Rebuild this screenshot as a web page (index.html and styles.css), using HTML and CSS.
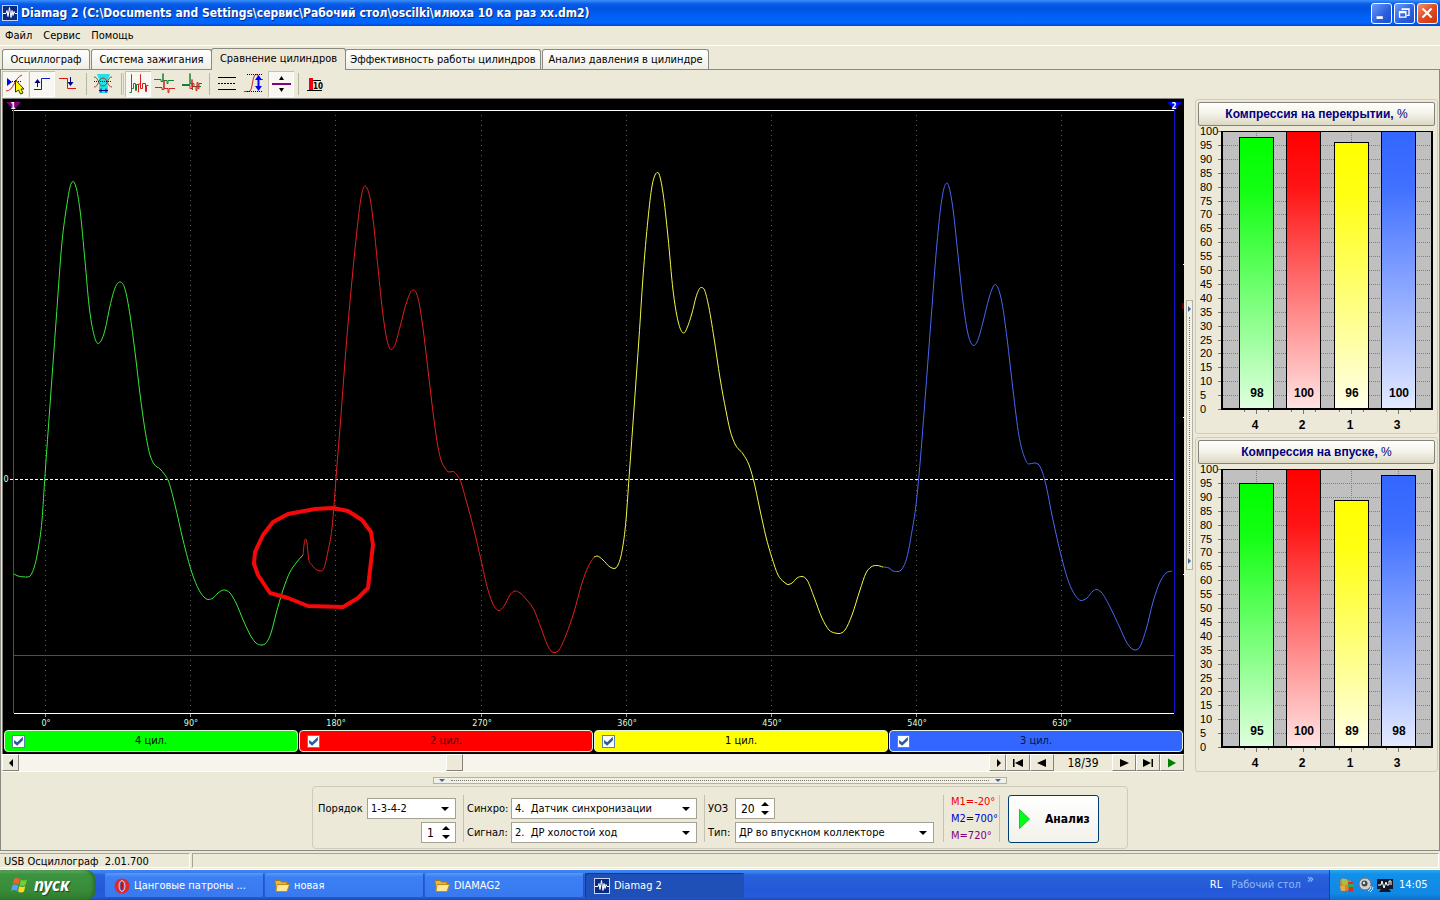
FILE: index.html
```html
<!DOCTYPE html>
<html lang="ru">
<head>
<meta charset="utf-8">
<title>Diamag 2</title>
<link rel="stylesheet" href="styles.css">
</head>
<body>
<svg class="defs" width="0" height="0" aria-hidden="true">
  <defs>
    <symbol id="logo" viewBox="0 0 16 16">
      <rect width="16" height="16" fill="#0a2a80"/><rect x=".5" y=".5" width="15" height="15" fill="none" stroke="#c8d4f0"/>
      <path d="M1 8.500h3l1-3 1 6 1.500-9 1.500 10 1-7 1 5 1-4 1 2h2" fill="none" stroke="#fff"/>
    </symbol>
    <symbol id="folder" viewBox="0 0 16 16">
      <path d="M1 3.500l1-1h4l1.500 1.500H13v9H2z" fill="#e8b83c" stroke="#a87818"/>
      <path d="M3 6.500h12.500L13 13.500H2z" fill="#ffe890" stroke="#b88a20"/>
    </symbol>
    <linearGradient id="fade-green" x1="0" y1="0" x2="0" y2="1"><stop offset="0" stop-color="#00ff00"/><stop offset=".2" stop-color="#14ff14"/><stop offset="1" stop-color="#e0ffe0"/></linearGradient>
    <linearGradient id="fade-red" x1="0" y1="0" x2="0" y2="1"><stop offset="0" stop-color="#ff0000"/><stop offset=".2" stop-color="#ff1414"/><stop offset="1" stop-color="#ffe4e4"/></linearGradient>
    <linearGradient id="fade-yellow" x1="0" y1="0" x2="0" y2="1"><stop offset="0" stop-color="#ffff00"/><stop offset=".2" stop-color="#ffff14"/><stop offset="1" stop-color="#ffffe8"/></linearGradient>
    <linearGradient id="fade-blue" x1="0" y1="0" x2="0" y2="1"><stop offset="0" stop-color="#3366ff"/><stop offset=".2" stop-color="#4070ff"/><stop offset="1" stop-color="#e4eaff"/></linearGradient>
  </defs>
</svg>

<header class="titlebar">
  <svg class="icon16"><use href="#logo"/></svg>
  <h1 class="title">Diamag 2 (C:\Documents and Settings\сервис\Рабочий стол\oscilki\илюха 10 ка раз xx.dm2)</h1>
  <button class="win-btn" aria-label="Свернуть"><svg viewBox="0 0 21 21"><path d="M5 15h7" stroke="#fff" stroke-width="3"/></svg></button>
  <button class="win-btn" aria-label="Восстановить"><svg viewBox="0 0 21 21"><path d="M8 7V5.500h7.500v7H13M5 8.500h7v6H5zM5 9.500h7M8 6h7" fill="none" stroke="#fff" stroke-width="1.500"/></svg></button>
  <button class="win-btn close" aria-label="Закрыть"><svg viewBox="0 0 21 21"><path d="M5 5l10 10M15 5L5 15" stroke="#fff" stroke-width="2.200"/></svg></button>
</header>

<nav class="menubar">
  <button>Файл</button><button>Сервис</button><button>Помощь</button>
</nav>

<div class="tabs" role="tablist">
  <button class="tab t1" role="tab">Осциллограф</button>
  <button class="tab t2" role="tab">Система зажигания</button>
  <button class="tab t3 active" role="tab" aria-selected="true">Сравнение цилиндров</button>
  <button class="tab t4" role="tab">Эффективность работы цилиндров</button>
  <button class="tab t5" role="tab">Анализ давления в цилиндре</button>
</div>

<main class="page">
  <div class="toolbar" role="toolbar">
    <button class="tool on" aria-label="Курсор"><svg viewBox="2 71 26 26"><path d="M7 78v8l5-4z" fill="#00f"/><path d="M6 91c8 0 8-13 16-16" fill="none" stroke="#c22"/><path d="M12 81.500h10" stroke="#008" stroke-dasharray="1 1"/><path d="M15.500 80v12l3-2 2 4 2.500-1-2-4h3z" fill="#ff0" stroke="#330"/></svg></button>
    <button class="tool on" aria-label="Передний фронт"><svg viewBox="29 71 26 26"><path d="M34 89.500h7.500v-11H50" fill="none" stroke="#1414c8"/><path d="M37.500 87v-7" stroke="#008"/><path d="M34.500 83l3-4 3 4z" fill="#008"/></svg></button>
    <button class="tool" aria-label="Задний фронт"><svg viewBox="56 71 26 26"><path d="M59 78.500h8.500v10H76" fill="none" stroke="#e01010"/><path d="M70.500 77v7" stroke="#008"/><path d="M67.500 82l3 4 3-4z" fill="#008"/></svg></button>
    <span class="sep"></span>
    <button class="tool" aria-label="Диапазон"><svg viewBox="91 71 26 26"><path d="M97 74h13l-3 8 1 5v6h-9v-6l1-5z" fill="#20e0e8"/><path d="M94 77c5 0 4 9 9 9s4-9 9-9" fill="none" stroke="#188030"/><path d="M94 87c5 0 4-9 9-9s4 9 9 9" fill="none" stroke="#b03030"/><path d="M94 81.500h18" stroke="#023" stroke-dasharray="1 1"/><path d="M99 90.500h9M101 88.500v4M106 88.500v4" stroke="#008"/></svg></button>
    <span class="sep double"></span>
    <button class="tool on" aria-label="Рядом"><svg viewBox="125 71 26 26"><path d="M129.500 92.500h2v-18 14h2v-5h2v7h1v-6h2" fill="none" stroke="#188030"/><path d="M137.500 92h1v-8h2V74.500v14h2v-5h3v8h1v-6h2" fill="none" stroke="#d02020"/></svg></button>
    <button class="tool" aria-label="Друг под другом"><svg viewBox="152 71 26 26"><path d="M154 79.500h7v2h2v-8 7h4v3h1v-3h6" fill="none" stroke="#188030"/><path d="M155 87.500h7v2h2v-9 8h4v4h1v-4h6" fill="none" stroke="#d02020"/></svg></button>
    <button class="tool" aria-label="Наложение"><svg viewBox="179 71 26 26"><path d="M182 84.500h8v-11 10h4v3h7M192.500 84v6" fill="none" stroke="#188030"/><path d="M182 85.500h8v3h2v-9 7h4v4h1v-8h1v6h1v-5h3" fill="none" stroke="#d02020"/></svg></button>
    <span class="sep"></span>
    <button class="tool" aria-label="Уровни"><svg viewBox="214 71 26 26"><path d="M218 77.500h18M218 89.500h18" stroke="#000"/><path d="M218 83.500h18" stroke="#000" stroke-dasharray="2 1"/></svg></button>
    <button class="tool" aria-label="Масштаб"><svg viewBox="241 71 26 26"><path d="M244 91.500h5c4 0 3-17 7-17s3 6 7 5" fill="none" stroke="#c22"/><path d="M247 74.500h16M247 91.500h16" stroke="#000" stroke-dasharray="1 1"/><path d="M258.500 78v11" stroke="#00f" stroke-width="2"/><path d="M255 80l3.500-5 3.500 5zM255 86l3.500 5 3.500-5z" fill="#00f"/></svg></button>
    <button class="tool on" aria-label="Смещение"><svg viewBox="268 71 26 26"><path d="M272 84h19" stroke="#800080" stroke-width="2"/><path d="M279 80l2.500-4 2.500 4zM279 88l2.500 4 2.500-4z"/></svg></button>
    <span class="sep"></span>
    <button class="tool" aria-label="Шкала 10"><svg viewBox="303 71 26 26"><path d="M309 78h4v12h-4z" fill="#f00014"/><path d="M307 90.500h15M313 80.500h8" stroke="#000"/><text x="313" y="89" class="tiny">10</text></svg></button>
  </div>

  <div class="content">
    <section class="left">
      <div class="scope">
        <svg class="plot" viewBox="3 99 1181 631" role="img" aria-label="Осциллограмма">
          <g id="grid"></g>
          <path d="M12 110.500h1162M14 713.500h1160" class="frame"/>
          <rect x="13" y="105" width="1" height="608" fill="#90209a"/>
          <rect x="1174" y="105" width="1" height="608" fill="#1010c8"/>
          <path d="M10 479.500h1164" class="zero"/>
          <rect x="14" y="655" width="1160" height="1" fill="#d01818"/>
          <path d="M6 102h15l-7 8z" fill="#800080"/><path d="M1167 102h15l-7 8z" fill="#0000ff"/>
          <text x="13" y="109" class="mark">1</text><text x="1174" y="109" class="mark">2</text>
          <text x="6" y="482" class="tick">0</text>
          <g id="traces"></g>
          <path class="pen" d="M315 509L333 508 348 511 362 520 371 532 373 545 370 570 368 588 358 598 343 607 308 606 288 598 270 593 258 575 254 564 255 552 263 535 273 522 288 514 315 509 333 508"/>
          <path d="M1183 264.500h1M1183 417.500h1M1183 574.500h1" stroke="#fff"/><path d="M1183 303v6" stroke="#c00"/>
        </svg>
        <div class="cylinders">
          <label class="cyl green"><input type="checkbox" checked><span>4 цил.</span></label>
          <label class="cyl red"><input type="checkbox" checked><span>2 цил.</span></label>
          <label class="cyl yellow"><input type="checkbox" checked><span>1 цил.</span></label>
          <label class="cyl blue"><input type="checkbox" checked><span>3 цил.</span></label>
        </div>
      </div>
      <div class="scroller">
        <button class="nav narrow" aria-label="Влево"><svg viewBox="0 0 16 12"><path d="M10 2v8L6 6z"/></svg></button>
        <input class="track" type="range" min="0" max="1000" value="448" aria-label="Прокрутка">
        <button class="nav narrow" aria-label="Вправо"><svg viewBox="0 0 16 12"><path d="M7 2v8l4-4z"/></svg></button>
        <button class="nav" aria-label="Первый"><svg viewBox="0 0 16 12"><path d="M3 2h1.500v8H3zM13 2v8L5 6z"/></svg></button>
        <button class="nav" aria-label="Предыдущий"><svg viewBox="0 0 16 12"><path d="M12 2v8L3 6z"/></svg></button>
        <output class="counter">18/39</output>
        <button class="nav" aria-label="Следующий"><svg viewBox="0 0 16 12"><path d="M4 2v8l9-4z"/></svg></button>
        <button class="nav" aria-label="Последний"><svg viewBox="0 0 16 12"><path d="M3 2v8l8-4zM11.500 2H13v8h-1.500z"/></svg></button>
        <button class="nav play" aria-label="Воспроизвести"><svg viewBox="0 0 16 12"><path d="M4 1.500v9L12 6z"/></svg></button>
      </div>
    </section>

    <div class="vsplit"><svg viewBox="0 0 5 8"><path d="M1 1v6l3-3z"/></svg><i></i><svg viewBox="0 0 5 8"><path d="M1 1v6l3-3z"/></svg></div>

    <aside class="right">
      <section class="card">
        <button class="card-head">Компрессия на перекрытии, <span>%</span></button>
        <svg class="bars" viewBox="1197 126 239 307" preserveAspectRatio="xMinYMin" data-values="98,100,96,100"></svg>
      </section>
      <section class="card">
        <button class="card-head">Компрессия на впуске, <span>%</span></button>
        <svg class="bars" viewBox="1197 126 239 307" preserveAspectRatio="xMinYMin" data-values="95,100,89,98"></svg>
      </section>
    </aside>
  </div>

  <div class="hsplit"><svg viewBox="0 0 8 5"><path d="M1 1h6L4 4z"/></svg><i></i><svg viewBox="0 0 8 5"><path d="M1 1h6L4 4z"/></svg></div>

  <form class="panel">
    <div class="group order">
      <label for="order">Порядок</label>
      <span class="combo"><select id="order"><option>1-3-4-2</option></select></span>
      <span class="spin"><input id="first" type="number" value="1" aria-label="Первый цилиндр"><svg viewBox="0 0 8 14"><path d="M0 4l4-4 4 4zM0 9l4 4 4-4z"/></svg></span>
    </div>
    <div class="group sync">
      <label for="sync">Синхро:</label>
      <span class="combo"><select id="sync"><option>4.&nbsp; Датчик синхронизации</option></select></span>
      <label for="signal">Сигнал:</label>
      <span class="combo"><select id="signal"><option>2.&nbsp; ДР холостой ход</option></select></span>
    </div>
    <div class="group kind">
      <label for="uoz">УОЗ</label>
      <span class="spin"><input id="uoz" type="number" value="20"><svg viewBox="0 0 8 14"><path d="M0 4l4-4 4 4zM0 9l4 4 4-4z"/></svg></span>
      <label for="kind">Тип:</label>
      <span class="combo"><select id="kind"><option>ДР во впускном коллекторе</option></select></span>
    </div>
    <div class="group marks">
      <span class="m1">M1=-20°</span><span class="m2">M2=700°</span><span class="m3">M=720°</span>
    </div>
    <div class="group go">
      <button class="analyze" type="button"><svg viewBox="0 0 11 20"><path d="M.5.500v19l10-9.500z" fill="#00ff18" stroke="#20c030"/></svg><b>Анализ</b></button>
    </div>
  </form>
</main>

<footer class="status"><span class="cell version">USB Осциллограф&nbsp; 2.01.700</span><span class="cell rest"></span></footer>

<nav class="taskbar">
  <button class="start"><svg viewBox="0 0 18 18"><path d="M3 3q3-2 6 0L7.500 8.500q-3-2-6 0z" fill="#f06030"/><path d="M10 3.500q3 2 6 0L14.500 9q-3 2-6 0z" fill="#70d030"/><path d="M1.300 9.500q3-2 6 0L6 15q-3-2-6 0z" fill="#58a0f8"/><path d="M8.300 10q3 2 6 0L13 15.500q-3 2-6 0z" fill="#ffd820"/></svg><span>пуск</span></button>
  <div class="tasks">
    <button class="task"><svg class="icon16" viewBox="0 0 16 16"><ellipse cx="8" cy="8" rx="7.500" ry="7.500" fill="#e02828"/><ellipse cx="8" cy="8" rx="3" ry="5.500" fill="#3a80f0" stroke="#fbb"/><ellipse cx="8" cy="8" rx="1.500" ry="4" fill="#c01010"/></svg>Цанговые патроны ...</button>
    <button class="task"><svg class="icon16"><use href="#folder"/></svg>новая</button>
    <button class="task"><svg class="icon16"><use href="#folder"/></svg>DIAMAG2</button>
    <button class="task current"><svg class="icon16"><use href="#logo"/></svg>Diamag 2</button>
  </div>
  <span class="lang">RL</span>
  <button class="desk">Рабочий стол</button>
  <span class="more">»</span>
  <div class="tray">
    <svg class="icon16" viewBox="0 0 16 16"><path d="M1 4l3-3 4 2 4 1v6L8 14H2z" fill="#e08028"/><path d="M2 2h6l1 5-5 2z" fill="#a8c040"/><path d="M9 5h5v9l-4 1z" fill="#d83020"/><path d="M9 7h5v3H9z" fill="#30a860"/><path d="M1 9h5v5H2z" fill="#e8a848"/></svg>
    <svg class="icon16" viewBox="0 0 16 16"><circle cx="7" cy="7" r="6" fill="#d0d0d0" stroke="#707070"/><circle cx="6.500" cy="6.500" r="3" fill="#404850"/><circle cx="6" cy="6" r="1.200" fill="#e8e8e8"/><path d="M10 14q3-1 3-5M12 15q3-2 3-5" fill="none" stroke="#cfe4ff"/></svg>
    <svg class="icon16" viewBox="0 0 16 16"><path d="M0 2h16v10H0zM4 12h8l2 3H2z" fill="#101828"/><path d="M1 8h3l1-4 2 7 2-6 1 3h2V4h2v4" fill="none" stroke="#fff"/></svg>
    <time>14:05</time>
  </div>
</nav>
<script src="charts.js"></script>
</body>
</html>
```
FILE: styles.css
```css
* { box-sizing: border-box; }
body {
  margin: 0; height: 100vh; display: flex; flex-direction: column; overflow: hidden;
  background: #ece9d8; color: #000;
  font: 11px/14px "DejaVu Sans Condensed", "DejaVu Sans", sans-serif;
}
button, input, select { font: inherit; color: inherit; margin: 0; padding: 0; border: 0; background: none; border-radius: 0; }
svg { display: block; flex: none; }
.defs { position: absolute; }
.icon16 { width: 16px; height: 16px; }

.titlebar {
  flex: none; height: 26px; display: flex; align-items: center; gap: 2px; padding: 0 2px;
  background: linear-gradient(#3c90fa 0, #0a5ce8 4px, #0054e0 8px, #0060f4 16px, #0166ff 23px, #0044c8 26px);
}
.title { flex: 1; margin: 0 0 0 1px; color: #fff; font-size: 12px; font-weight: bold; line-height: 20px; text-shadow: 1px 1px 0 #0a2a80; white-space: nowrap; }
.win-btn { width: 21px; height: 21px; border: 1px solid #fff; border-radius: 3px; background: linear-gradient(135deg, #6a9cf8, #2a5ee0 60%, #1c50d0); }
.win-btn svg { width: 19px; height: 19px; }
.win-btn.close { background: linear-gradient(135deg, #f09070, #e04c20 50%, #c83808); }

.menubar { flex: none; height: 20px; display: flex; gap: 11px; padding: 0 5px; border-bottom: 1px solid #fff; }
.tabs { flex: none; height: 23px; display: flex; align-items: flex-end; padding-left: 2px; gap: 1px; }
.tab { height: 20px; border: 1px solid #8b8a80; border-bottom: 0; border-radius: 3px 3px 0 0; background: linear-gradient(#fff, #f0efe6); text-align: center; white-space: nowrap; }
.tab.active { height: 22px; margin: 0 -2px -1px; padding-bottom: 2px; background: #ece9d8; position: relative; }
.t1 { width: 88px; } .t2 { width: 121px; } .t3 { width: 135px; } .t4 { width: 196px; } .t5 { width: 167px; }

.page { flex: 1; min-height: 0; display: flex; flex-direction: column; border: 1px solid #8b8a80; }
.toolbar { flex: none; height: 28px; display: flex; align-items: center; gap: 1px; padding-left: 1px; }
.tool { width: 26px; height: 26px; }
.tool svg { width: 26px; height: 26px; }
.tool.on { background: #f8f7f1; box-shadow: inset 1px 1px 0 #c4c1b0, inset -1px -1px 0 #fff; }
.sep { width: 7px; height: 22px; background: linear-gradient(#b8b5a2, #b8b5a2) 3px 0 / 1px 100% no-repeat; }
.sep.double { width: 6px; border-right: 1px solid #c8c5b4; }
.tiny { font: bold 8px "DejaVu Sans Condensed", sans-serif; }

.content { flex: 1; min-height: 0; display: flex; padding: 0 1px 1px; }
.left { flex: 1; min-width: 0; display: flex; flex-direction: column; }
.scope { flex: 1; min-height: 0; display: flex; flex-direction: column; background: #000; border: solid #84827a; border-width: 1px 0 0 1px; }
.plot { flex: 1; min-height: 0; width: 100%; }
.frame { stroke: #fff; }
.zero { stroke: #fff; stroke-dasharray: 3 2; }
.grid-line { stroke: #5c5c5c; stroke-dasharray: 1 4; }
.trace { fill: none; stroke-width: 1; }
.pen { fill: none; stroke: #f40808; stroke-width: 4; stroke-linejoin: round; }
.tick { fill: #d8ffd8; font-size: 9px; text-anchor: middle; }
.mark { fill: #fff; font-size: 8px; font-weight: bold; text-anchor: middle; }

.cylinders { flex: none; height: 24px; display: grid; grid-template-columns: repeat(4, 1fr); gap: 1px; padding: 0 1px 2px; }
.cyl { display: flex; align-items: center; padding: 0 7px; border: 1px solid #e4f4d8; border-radius: 4px; }
.cyl span { flex: 1; text-align: center; padding-right: 13px; }
.cyl.green { background: #00ff00; } .cyl.red { background: #ff0000; color: #500; } .cyl.yellow { background: #ffff00; } .cyl.blue { background: #3366ff; color: #001450; }
.cyl input { appearance: none; width: 13px; height: 13px; border: 1px solid #6080a8; background: #fff; }
.cyl input:checked::after { content: ""; display: block; width: 11px; height: 11px; background: #2c5aa0; clip-path: polygon(10% 40%, 38% 62%, 90% 12%, 90% 44%, 38% 94%, 10% 70%); }

.scroller { flex: none; height: 18px; display: flex; align-items: stretch; border-bottom: 1px solid #fff; }
.nav { width: 24px; display: flex; align-items: center; justify-content: center; border: 1px solid; border-color: #fff #84827a #84827a #fff; background: #ece9d8; }
.nav svg { width: 16px; height: 12px; }
.nav.narrow { width: 17px; }
.nav.play svg { fill: #008000; }
.track { flex: 1; min-width: 0; appearance: none; background: #f6f4ec; }
.track::-webkit-slider-thumb { appearance: none; width: 17px; height: 17px; background: #ece9d8; border: 1px solid; border-color: #fff #84827a #84827a #fff; }
.counter { width: 58px; text-align: center; font-size: 12px; line-height: 18px; }

.vsplit { width: 7px; height: 270px; flex: none; align-self: center; margin: 0 2px; padding: 4px 0; display: flex; flex-direction: column; align-items: center; justify-content: space-between; border: 1px solid #b4b1a0; background: #f2f1e8; }
.vsplit svg { width: 5px; height: 8px; fill: #3c64a8; }
.vsplit i { flex: 1; margin: 4px 0; border-left: 1px dotted #77756a; }
.hsplit { width: 574px; height: 7px; flex: none; align-self: center; margin: 4px 0 2px; padding: 0 4px; display: flex; align-items: center; border: 1px solid #b4b1a0; background: #f2f1e8; }
.hsplit svg { width: 8px; height: 5px; fill: #3c64a8; }
.hsplit i { flex: 1; margin: 0 5px; border-top: 1px dotted #77756a; }

.right { width: 243px; flex: none; display: flex; flex-direction: column; gap: 3px; padding-top: 1px; }
.card { flex: 1; min-height: 0; display: flex; flex-direction: column; border: 1px solid #cfccbb; border-radius: 3px; padding: 2px 1px 0; }
.card-head { flex: none; height: 24px; margin: 0 1px; border: 1px solid #84827a; border-radius: 2px; background: linear-gradient(#fff, #f4f2e8 50%, #dcd8c4); color: #000080; font: bold 12px/20px "Liberation Sans", sans-serif; }
.card-head span { font-weight: normal; }
.bars { flex: 1; min-height: 0; width: 100%; }
.bars text { font: 11px "Liberation Sans", sans-serif; }
.bars .num { font-weight: bold; font-size: 12px; text-anchor: middle; }

.panel { flex: none; align-self: center; height: 63px; display: flex; margin-bottom: 1px; padding: 8px 28px 6px 5px; border: 1px solid #cfccbb; border-radius: 4px; }
.group { display: grid; align-items: center; grid-template-rows: 21px 21px; row-gap: 3px; padding: 3px 7px 0 3px; border-right: 1px solid #c4c1b0; }
.order { grid-template-columns: 49px 89px; padding-left: 0; }
.order .spin { grid-column: 2; justify-self: end; width: 35px; }
.sync { grid-template-columns: 44px 186px; }
.kind { grid-template-columns: 27px 199px; padding-right: 9px; }
.kind .spin { width: 40px; }
.marks { display: flex; flex-direction: column; align-items: flex-start; justify-content: space-between; padding: 0 4px 0 7px; width: 56px; }
.go { display: block; border: 0; padding: 0 0 0 8px; }
.combo, .spin { position: relative; display: flex; height: 21px; border: 1px solid #a5a294; background: #fff; }
.combo select { appearance: none; width: 100%; padding: 0 20px 0 3px; }
.combo::after { content: ""; position: absolute; right: 6px; top: 8px; border: 4px solid transparent; border-top-color: #000; border-bottom: 0; pointer-events: none; }
.spin input { flex: 1; min-width: 0; padding-left: 5px; font-size: 12px; appearance: textfield; }
.spin input::-webkit-inner-spin-button { appearance: none; }
.spin svg { width: 8px; height: 14px; margin: 3px 5px 0 0; }
.m1 { color: #f00000; } .m2 { color: #0000d0; } .m3 { color: #800080; }
.analyze { width: 91px; height: 48px; display: flex; align-items: center; padding-left: 10px; gap: 15px; border: 1px solid #003c74; border-radius: 3px; background: linear-gradient(#fff, #f2f1ea); font-size: 12px; }
.analyze svg { width: 11px; height: 20px; }

.status { flex: none; height: 19px; display: flex; gap: 2px; padding: 2px 1px 1px 0; border-bottom: 1px solid #fff; }
.cell { border: 1px solid; border-color: #a8a594 #fff #fff #a8a594; padding-left: 4px; line-height: 15px; }
.cell.version { width: 190px; border-left: 0; }
.cell.rest { flex: 1; }

.taskbar { flex: none; height: 30px; display: flex; align-items: stretch; color: #fff; background: linear-gradient(#3a80f0 0, #3a84f0 2px, #2862dc 5px, #2458d8 20px, #245cdc 27px, #1c48b0 30px); }
.start { width: 96px; display: flex; align-items: center; gap: 5px; padding-left: 11px; border-radius: 0 10px 10px 0; background: linear-gradient(#68b068 0, #3c9440 4px, #388c38 20px, #2c7a2c 30px); box-shadow: inset -3px 0 3px #2c7030; }
.start svg { width: 18px; height: 18px; }
.start span { font: italic bold 17px/22px "Noto Sans", sans-serif; color: #fff; text-shadow: 1px 1px 1px #184818; }
.tasks { flex: 1; min-width: 0; display: flex; gap: 1px; padding: 3px 0 2px 9px; }
.task { width: 159px; display: flex; align-items: center; gap: 4px; padding-left: 9px; border-radius: 2px; background: linear-gradient(#5c98fc 0, #3c80f4 4px, #3878f0); box-shadow: inset -1px -1px 0 #2458c0; text-align: left; white-space: nowrap; }
.task.current { background: #1e50b8; box-shadow: inset 1px 1px 0 #123a88; }
.lang { align-self: center; margin-right: 9px; }
.desk { color: #90b8f8; }
.more { margin: 2px 15px 0 6px; color: #a8c8ff; font-size: 13px; }
.tray { width: 111px; display: flex; align-items: center; gap: 3px; padding-left: 9px; border-left: 1px solid #0a4898; background: linear-gradient(#28a8f0 0, #1490e8 4px, #1088e4 24px, #0c70c8 30px); }
.tray time { margin-left: 3px; }
```
FILE: charts.js
```js
const NS = "http://www.w3.org/2000/svg";

function add(parent, tag, attrs, text) {
  const el = document.createElementNS(NS, tag);
  for (const key in attrs) el.setAttribute(key, attrs[key]);
  if (text !== undefined) el.textContent = text;
  parent.appendChild(el);
  return el;
}

// Monotone cubic interpolation: smooth without overshooting peaks.
function smooth(flat) {
  const p = [];
  for (let i = 0; i < flat.length; i += 2) p.push([flat[i], flat[i + 1]]);
  const n = p.length, d = [], w = [], m = [];
  for (let i = 0; i < n - 1; i++) {
    w.push(p[i + 1][0] - p[i][0]);
    d.push((p[i + 1][1] - p[i][1]) / w[i]);
  }
  for (let i = 0; i < n; i++) {
    if (i === 0) m.push(d[0]);
    else if (i === n - 1) m.push(d[n - 2]);
    else if (d[i - 1] * d[i] <= 0) m.push(0);
    else {
      const mean = (w[i - 1] * d[i] + w[i] * d[i - 1]) / (w[i - 1] + w[i]);
      const limit = 3 * Math.min(Math.abs(d[i - 1]), Math.abs(d[i]));
      m.push(Math.sign(mean) * Math.min(Math.abs(mean), limit));
    }
  }
  let s = `M${p[0][0]} ${p[0][1]}`;
  for (let i = 0; i < n - 1; i++) {
    const h = w[i] / 3;
    s += `C${p[i][0] + h} ${p[i][1] + m[i] * h} ${p[i + 1][0] - h} ${p[i + 1][1] - m[i + 1] * h} ${p[i + 1][0]} ${p[i + 1][1]}`;
  }
  return s;
}

const grid = document.getElementById("grid");
[45, 190, 335, 481, 626, 771, 916, 1061].forEach((x, i) => {
  add(grid, "path", { d: `M${x + 0.5} 115v598`, class: "grid-line" });
  add(grid, "path", { d: `M${x + 0.5} 714v3`, stroke: "#999" });
  add(grid, "text", { x: x + 1, y: 726, class: "tick" }, `${i * 90}°`);
});

const traces = [
  ["#38e838", [14,574,18,576,28,577,32,573,38,550,42,520,45,475,50,405,56,322,62,242,67,204,70,187,73,181.5,76,187,80,210,85,261,89,305,94,335,98,343.5,101,341,105,330,110,306,115,288,120,282,125,289,130,315,135,352,140,394,145,430,150,455,154,464,160,469,165,475,168,480,175,505,183,540,192,573,199,590,204,597,208,599.5,213,598,218,593,224,590,230,593,236,603,244,622,252,638,256,643,261,645,265,644,271,633,276,614,283,590,290,572,296,563,303,555]],
  ["#e02020", [303,555,304,545,305.5,539,307,543,308.5,558,312,565,317,570,321,571,324,568,328,551,332,528,334,505,336,478,341,415,346,348,352,280,357,230,361,198,363,189,365,186,367,188,370,198,373,219,378,268,383,315,387,340,391,349.5,394,347,400,327,406,304,413,290,418,298,422,321,428,370,434,420,438,447,441,460,445,468,449,472,453,471.5,457,475,460,480,466,500,474,530,481,560,488,590,494,606,499,610.5,504,606,510,595,515,591,520,593,527,600,534,610,541,628,547,644,551,651,555,652.5,559,650,566,635,574,612,582,583,588,567,594,557]],
  ["#f4f840", [594,557,597,556,603,560,610,567,614,568.5,618,565,622,551,626,520,629,478,635,395,639,338,643,277,648,219,652,186,655,175,658,172.5,660,177,663,193,668,237,673,290,678,321,682,332,684,333,687,328,692,313,697,294,701,287.5,704,289,708,303,714,338,720,378,726,411,730,430,735,444,743,454,749,465,753,478,760,510,766,537,772,558,778,575,784,582,788,584.5,792,583,797,578,802,576.5,807,580,814,597,822,618,829,630,835,633,839,633.5,845,630,852,615,860,590,866,573,871,567,877,565.5,883,567]],
  ["#4868f0", [883,567,889,568,893,571,898,571.5,902,569,907,557,912,531,916,505,919,475,925,400,931,320,937,243,941,205,944,188,947,183,949,187,952,202,958,255,963,302,968,334,972,344.5,974,345.5,977,342,983,322,989,298,993,287,995,284.5,998,288,1002,303,1007,338,1013,390,1019,436,1024,456,1029,464,1034,463,1038,464,1042,471,1045,481,1053,520,1061,555,1069,583,1075,595,1081,600.5,1087,598,1093,591,1096,589.5,1101,592,1110,607,1120,628,1127,643,1131,648,1135,650,1139,648,1146,630,1153,602,1160,582,1166,573,1172,571]]
];
const traceLayer = document.getElementById("traces");
traces.forEach(([color, points]) => add(traceLayer, "path", { d: smooth(points), class: "trace", stroke: color }));

const columns = [[1239, "green", "4"], [1286, "red", "2"], [1334, "yellow", "1"], [1381, "blue", "3"]];
document.querySelectorAll(".bars").forEach(svg => {
  const values = svg.dataset.values.split(",").map(Number);
  add(svg, "rect", { x: 1222, y: 131, width: 210, height: 278, fill: "#c0c0c0" });
  for (let v = 0; v <= 100; v += 5) {
    const y = Math.round(409 - v * 2.78);
    add(svg, "path", { d: `M1218 ${y + 0.5}h4`, stroke: "#777" });
    if (v > 0 && v < 100) add(svg, "path", { d: `M1223 ${y + 0.5}h208`, stroke: "#808080", "stroke-dasharray": "1 1" });
    add(svg, "text", { x: 1200, y: y + 4 }, v);
  }
  columns.forEach(([x, color, name], i) => {
    const y = Math.round(409 - values[i] * 2.78);
    add(svg, "path", { d: `M${x + 17.5} 131v278`, stroke: "#808080", "stroke-dasharray": "1 1" });
    add(svg, "rect", { x: x + 0.5, y: y + 0.5, width: 34, height: 409 - y, fill: `url(#fade-${color})`, stroke: "#000" });
    add(svg, "text", { x: x + 18, y: 397, class: "num" }, values[i]);
    add(svg, "path", { d: `M${x + 17.5} 410v4M${x + 5.5} 410v2M${x + 29.5} 410v2`, stroke: "#777" });
    add(svg, "text", { x: x + 16, y: 429, class: "num" }, name);
  });
  add(svg, "path", { d: "M1222 131.500h210", stroke: "#000" });
  add(svg, "path", { d: "M1222 131v278M1432 131v278M1221 409h212", stroke: "#000", "stroke-width": 2 });
});
```
